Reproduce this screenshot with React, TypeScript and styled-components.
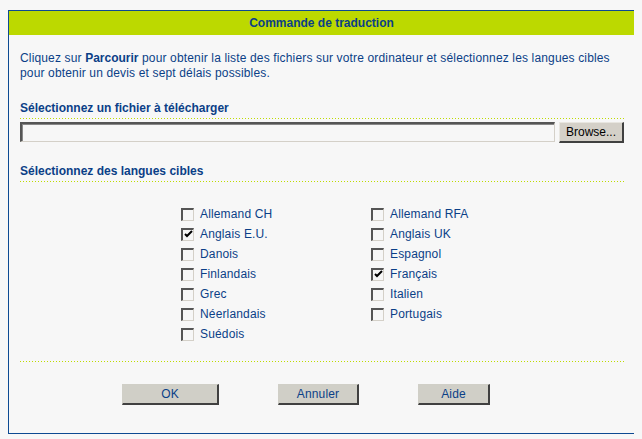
import React from "react";
import styled, { createGlobalStyle } from "styled-components";

const Global = createGlobalStyle`
  html, body { background: #f7f7f7; }
  body {
    margin: 8px;
    font-family: "Liberation Sans", Arial, sans-serif;
    font-size: 12px;
    color: #0b3f87;
  }
`;

const dots = `
  background-image: linear-gradient(to right, #bedc00 1px, transparent 1px);
  background-size: 3px 1px;
  background-repeat: repeat-x;
`;

const Panel = styled.div`
  box-sizing: border-box;
  width: 627px;
  height: 424px;
  margin-top: 2px;
  border: 1px solid #0d4a92;
  background: #f7f7f7;
  display: flex;
  flex-direction: column;
`;

const Header = styled.div`
  height: 24px;
  background: #bcd900;
  display: flex;
  align-items: center;
  justify-content: center;
  font-weight: bold;
  font-size: 12px;
  color: #0b3f87;
`;

const Body = styled.div`
  padding: 16px 10px 0 11px;
  display: flex;
  flex-direction: column;
`;

const Intro = styled.p`
  margin: 0;
  line-height: 15px;
  letter-spacing: 0.15px;
  b { font-weight: bold; letter-spacing: 0; }
`;

const SectionTitle = styled.div<{ $top: number }>`
  margin-top: ${(p) => p.$top}px;
  font-weight: bold;
  line-height: 15px;
  padding-bottom: 3px;
  ${dots}
  background-position: left bottom;
`;

const FileRow = styled.div`
  margin-top: 3px;
  display: flex;
  align-items: flex-start;
  gap: 4px;
  height: 21px;
`;

const FileInput = styled.div`
  box-sizing: border-box;
  width: 535px;
  height: 20px;
  background: #f7f7f7;
  border-style: solid;
  border-width: 2px 1px 1px 2px;
  border-color: #555 #d4d0c8 #d4d0c8 #555;
  box-shadow: inset 1px 1px 0 #888;
`;

const BrowseButton = styled.div`
  box-sizing: border-box;
  width: 65px;
  height: 21px;
  background: #d4d0c8;
  border-style: solid;
  border-width: 1px 2px 2px 1px;
  border-color: #e8e6e0 #404040 #404040 #e8e6e0;
  color: #000;
  font-size: 12px;
  display: flex;
  align-items: center;
  justify-content: center;
`;

const LangGrid = styled.div`
  margin-top: 22px;
  padding-left: 161px;
  display: grid;
  grid-template-columns: 190px auto;
  grid-auto-rows: 20px;
  grid-auto-flow: row;
`;

const LangItem = styled.label`
  display: flex;
  align-items: center;
  gap: 6px;
  line-height: 20px;
  white-space: nowrap;
  letter-spacing: 0.15px;
`;

const Box = styled.span`
  box-sizing: border-box;
  width: 13px;
  height: 13px;
  flex: none;
  background: #f7f7f7;
  border-style: solid;
  border-width: 2px 1px 1px 2px;
  border-color: #555 #d4d0c8 #d4d0c8 #555;
  display: flex;
  align-items: center;
  justify-content: center;
`;

const Divider = styled.div`
  margin-top: 17px;
  height: 1px;
  ${dots}
`;

const ButtonRow = styled.div`
  margin-top: 22px;
  padding-left: 102px;
  display: flex;
  gap: 59px;
`;

const ActionButton = styled.div<{ $w: number }>`
  box-sizing: border-box;
  width: ${(p) => p.$w}px;
  height: 21px;
  background: #d0cfc7;
  border-style: solid;
  border-width: 1px 2px 2px 1px;
  border-color: #d0cfc7 #404040 #404040 #d0cfc7;
  color: #0b3f87;
  display: flex;
  align-items: center;
  justify-content: center;
  font-size: 12px;
  letter-spacing: 0.15px;
`;

const Check = () => (
  <svg width="9" height="9" viewBox="0 0 9 9">
    <path d="M1 4 L3 6 L8 1" stroke="#000" strokeWidth="2" fill="none" />
  </svg>
);

const left = [
  ["Allemand CH", false],
  ["Anglais E.U.", true],
  ["Danois", false],
  ["Finlandais", false],
  ["Grec", false],
  ["Néerlandais", false],
  ["Suédois", false],
] as const;

const right = [
  ["Allemand RFA", false],
  ["Anglais UK", false],
  ["Espagnol", false],
  ["Français", true],
  ["Italien", false],
  ["Portugais", false],
] as const;

export default function App() {
  const items: React.ReactNode[] = [];
  for (let i = 0; i < left.length; i++) {
    const l = left[i];
    items.push(
      <LangItem key={"l" + i}>
        <Box>{l[1] && <Check />}</Box>
        {l[0]}
      </LangItem>
    );
    const r = right[i];
    items.push(
      r ? (
        <LangItem key={"r" + i}>
          <Box>{r[1] && <Check />}</Box>
          {r[0]}
        </LangItem>
      ) : (
        <span key={"r" + i} />
      )
    );
  }
  return (
    <>
      <Global />
      <Panel>
        <Header>Commande de traduction</Header>
        <Body>
          <Intro>
            Cliquez sur <b>Parcourir</b> pour obtenir la liste des fichiers sur votre ordinateur et
            sélectionnez les langues cibles pour obtenir un devis et sept délais possibles.
          </Intro>
          <SectionTitle $top={20}>Sélectionnez un fichier à télécharger</SectionTitle>
          <FileRow>
            <FileInput />
            <BrowseButton>Browse...</BrowseButton>
          </FileRow>
          <SectionTitle $top={21}>Sélectionnez des langues cibles</SectionTitle>
          <LangGrid>{items}</LangGrid>
          <Divider />
          <ButtonRow>
            <ActionButton $w={97}>OK</ActionButton>
            <ActionButton $w={81}>Annuler</ActionButton>
            <ActionButton $w={72}>Aide</ActionButton>
          </ButtonRow>
        </Body>
      </Panel>
    </>
  );
}
